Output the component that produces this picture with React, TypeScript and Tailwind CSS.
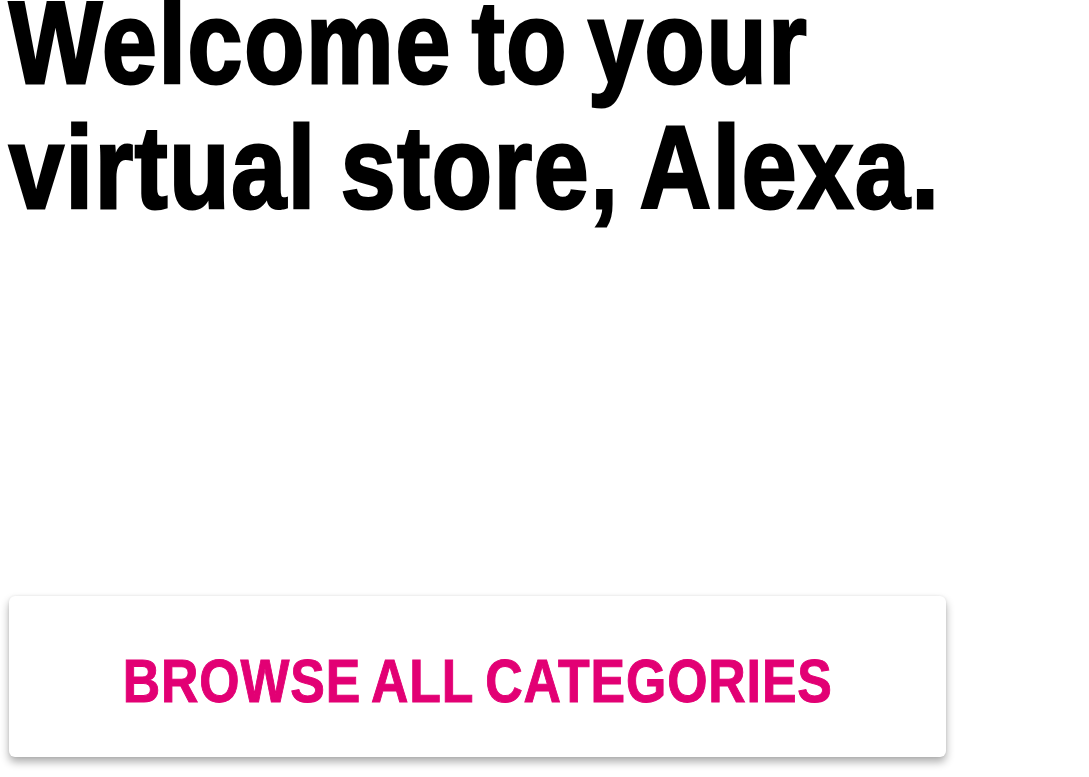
export default function App() {
  return (
    <div className="min-h-[777px] w-full overflow-hidden bg-white font-['Liberation_Sans',Arial,sans-serif]">
      <div className="flex flex-col pl-[9px]">
        <h1 className="-mt-[19px] origin-left scale-x-[0.85] whitespace-nowrap text-[116px] font-bold leading-[125px] tracking-[2px] text-black [-webkit-text-stroke:3px_black] [word-spacing:-11px]">
          Welcome to your
          <br />
          <span className="[word-spacing:-6px]">virtual store, Alexa.</span>
        </h1>
        <button
          type="button"
          className="mt-[365px] flex h-[161px] w-[937px] items-center justify-center rounded-md bg-white shadow-[0_5px_9px_rgba(0,0,0,0.32),0_0_3px_rgba(0,0,0,0.08)]"
        >
          <span className="mt-[9px] origin-center scale-x-[0.85] whitespace-nowrap text-[61px] font-bold leading-none tracking-[1px] text-[#e20074] [-webkit-text-stroke:1px_#e20074] [word-spacing:-4px]">
            BROWSE ALL CATEGORIES
          </span>
        </button>
      </div>
    </div>
  );
}
